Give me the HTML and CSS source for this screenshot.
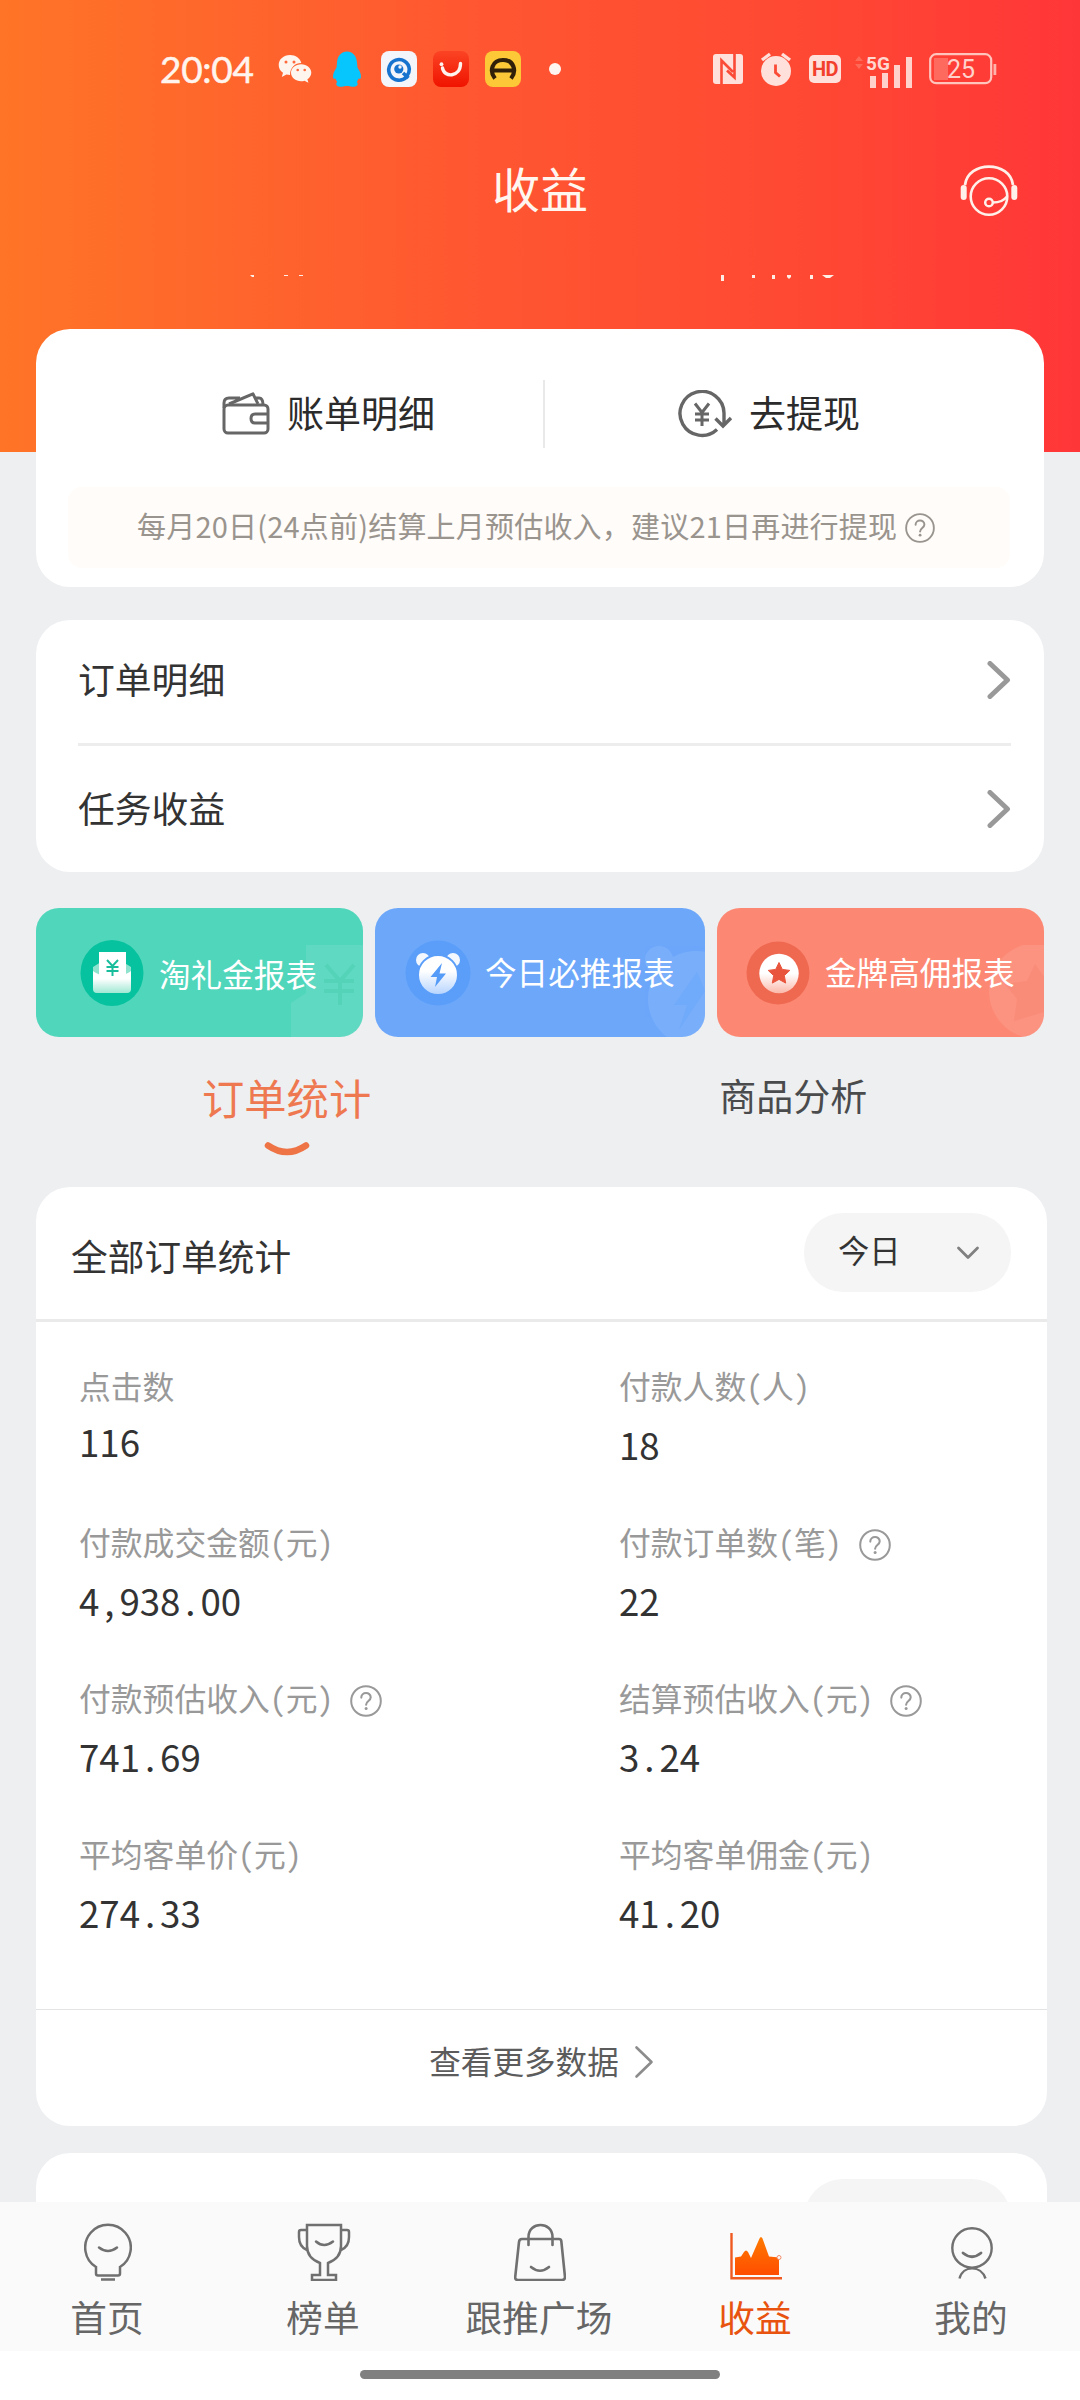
FILE: index.html
```html
<!DOCTYPE html>
<html lang="zh-CN">
<head>
<meta charset="utf-8">
<title>收益</title>
<link rel="stylesheet" href="styles.css">
</head>
<body>
<svg class="defs" width="0" height="0">
  <defs>
    <linearGradient id="fade-green" x1="0" y1="0" x2="0" y2="1"><stop offset=".35" stop-color="#fff"/><stop offset="1" stop-color="#9fe8d3"/></linearGradient>
    <linearGradient id="fade-blue" x1="0" y1="0" x2="0" y2="1"><stop offset=".4" stop-color="#fff"/><stop offset="1" stop-color="#b5d3ff"/></linearGradient>
    <linearGradient id="fade-red" x1="0" y1="0" x2="0" y2="1"><stop offset=".5" stop-color="#fff"/><stop offset="1" stop-color="#fbb9ab"/></linearGradient>
    <linearGradient id="app-red" x1="0" y1="0" x2="0" y2="1"><stop offset="0" stop-color="#fb4424"/><stop offset="1" stop-color="#f01300"/></linearGradient>
    <linearGradient id="chart-fill" x1="0" y1="0" x2="0" y2="1"><stop offset="0" stop-color="#ff7a00"/><stop offset="1" stop-color="#ff4d00"/></linearGradient>
    <symbol id="help" viewBox="0 0 32 32"><circle cx="16" cy="16" r="14.8" fill="none" stroke="currentColor" stroke-width="2"/><path d="M11.3 12.6c0-6 9.4-6 9.4-.3 0 3.6-4.6 3.8-4.6 7.4" fill="none" stroke="currentColor" stroke-width="2.1" stroke-linecap="round"/><circle cx="16.1" cy="23.6" r="1.5" fill="currentColor"/></symbol>
    <symbol id="next" viewBox="0 0 24 38"><path d="M3 2.500 20.500 19 3 35.500" fill="none" stroke="currentColor" stroke-width="5" stroke-linecap="round" stroke-linejoin="round"/></symbol>
  </defs>
</svg>
<div class="screen">
  <header class="header">
    <div class="status">
      <div class="status-left">
        <span class="clock">20:04</span>
        <svg width="34" height="30" viewBox="0 0 34 30"><path fill="#fff5ef" d="M12 1C5.500 1 .700 5.400.700 11c0 3.200 1.600 6 4.300 7.800L3.800 23l4.600-2.500c1.200.300 2.400.400 3.600.4C12 13.500 17 9 23.300 9 22.300 4.300 17.600 1 12 1z"/><path fill="#fff5ef" d="M23.200 10.300c-5.700 0-10.200 3.800-10.200 8.500s4.500 8.500 10.200 8.500c1.200 0 2.300-.1 3.300-.5l3.900 2-1-3.500c2.500-1.600 3.900-4 3.900-6.500 0-4.700-4.500-8.500-10.100-8.500z"/><g fill="#ff6a3c"><circle cx="8" cy="8" r="1.500"/><circle cx="16" cy="8" r="1.500"/><circle cx="19.700" cy="16" r="1.300"/><circle cx="26.700" cy="16" r="1.300"/></g></svg>
        <svg width="30" height="37" viewBox="0 0 30 37"><path fill="#06c6fd" d="M15 .5c5.500 0 9.500 4 10 11l.5 5c2 3.500 3.800 6.300 3.500 9.500-.2 2-1 2-2.500 1.500-.6 1.500-1 2.500-1.700 3.500 1.500 1.500 1.500 4.500-2.800 4.700-2.500 0-4.500-.2-5.500-.7h-3c-1 .5-3 .7-5.500.7-4.300-.2-4.300-3.200-2.800-4.700-.7-1-1.100-2-1.700-3.500-1.500.5-2.300.5-2.500-1.500-.3-3.200 1.500-6 3.500-9.500l.5-5C5.500 4.500 9.500.5 15 .5z"/></svg>
        <svg width="36" height="36" viewBox="0 0 36 36"><rect width="36" height="36" rx="8" fill="#f3f5fa"/><path d="M25.500 26A10.300 10.300 0 1 1 28.300 18c0 3-.8 4.800-2 6.300M22 22l5.500 5" fill="none" stroke="#1873cf" stroke-width="3.600"/><circle cx="17.800" cy="18" r="4.600" fill="#1873cf"/><circle cx="19" cy="16" r="1.700" fill="#f3f5fa"/></svg>
        <svg width="36" height="36" viewBox="0 0 36 36"><rect width="36" height="36" rx="8" fill="url(#app-red)"/><path d="M9.500 17c1.500 10 18 9.500 18-4.500" fill="none" stroke="#fff3ee" stroke-width="3.400" stroke-linecap="round"/><circle cx="8.500" cy="13.200" r="1.900" fill="#fff3ee"/></svg>
        <svg width="36" height="36" viewBox="0 0 36 36"><rect width="36" height="36" rx="8" fill="#fcc837"/><path d="M10 27.500C4 20 7 9 18 9s14 11 8 18.500M9 19.500h18" fill="none" stroke="#30200a" stroke-width="4.200"/></svg>
        <svg class="dot" width="12" height="12" viewBox="0 0 12 12"><circle cx="6" cy="6" r="6" fill="#fff5f0"/></svg>
      </div>
      <div class="status-right">
        <svg class="nfc" width="30" height="30" viewBox="0 0 30 30"><rect width="30" height="30" rx="3" fill="#ffe0da"/><path d="M8.500 30V6.500L20 18M21.500 0v23.500L14 16.500" fill="none" stroke="#fb4a35" stroke-width="2.600"/></svg>
        <svg class="alarm" width="32" height="34" viewBox="0 0 32 34"><circle cx="16" cy="19" r="15" fill="#ffe0da"/><path d="M2 8 10 2M30 8 22 2" stroke="#ffe0da" stroke-width="3.400"/><path d="M15.500 12.500v8l4.500 4" fill="none" stroke="#fb4a35" stroke-width="2.800"/></svg>
        <span class="hd">HD</span>
        <svg class="signal" width="60" height="42" viewBox="0 -6 60 42"><path fill="#ff6a58" d="M1 7l4-5 4 5zM1 10l4 5 4-5z"/><text x="12" y="16" class="signal-text">5G</text><path fill="#ffd3cc" d="M16 22h6v12h-6zM28 19h6v15h-6zM40 11h6v23h-6zM52 3h6v31h-6z"/></svg>
        <svg class="battery" width="68" height="32" viewBox="0 0 68 32"><path fill="#ff6a5e" d="M5 5h14v22H5z"/><rect x="1.200" y="1.200" width="61" height="29" rx="6" fill="none" stroke="#ffc4bc" stroke-width="2.200"/><path fill="#ffb3aa" d="M64.500 11h2.800v11h-2.800z"/><text x="32" y="25" text-anchor="middle" class="battery-text">25</text></svg>
      </div>
    </div>
    <div class="titlebar">
      <h1>收益</h1>
      <svg class="headset" width="58" height="52" viewBox="0 0 58 52" fill="none" stroke="#fff0ea"><path d="M5 20C8-4.500 50-4.500 53 20" stroke-width="2.800"/><circle cx="29" cy="31.500" r="18.300" stroke-width="2.600"/><path d="M3.700 23v9M54.300 23v9" stroke-width="6" stroke-linecap="round"/><circle cx="29" cy="37.500" r="3.800" stroke-width="2.500"/><path d="M33 37.500c6 0 11-2 14-6" stroke-width="2.500"/></svg>
    </div>
  </header>

  <main class="content">
    <svg class="clipped" width="1080" height="54" viewBox="0 0 1080 54" fill="#ffeee5"><path d="M250 0h4v2h-2zM284 0h4v1h-4zM299 0h4v1h-4zM721 0h3v6h-3zM752 0h3v3h-3zM772 0h3v4h-3zM787 0h4v2l-2 2-2-2zM810 0h3v4h-3zM822 0h12l-4 3h-4z"/></svg>

    <section class="card wallet">
      <div class="actions">
        <a class="action bill"><svg width="48" height="44" viewBox="0 0 48 44" fill="none" stroke="#666" stroke-width="3" stroke-linejoin="round"><rect x="2" y="13" width="44" height="28" rx="4"/><path d="M2 16V11q0-5 5-5h11M7 12 31 1.800l5 10M34 6h3q4 0 4 7M46 22H33q-4 0-4 4.500t4 4.500h13"/></svg><span>账单明细</span></a>
        <i class="divider"></i>
        <a class="action cash"><svg width="56" height="48" viewBox="0 0 56 48" fill="none" stroke="#666" stroke-width="3.400"><path d="M40 39.500A22 22 0 1 1 47 23v11M38.500 28.500 46 36l8-8"/><path d="M18 13.500l7 9 7-9M25 22.500V36M18 24h14M18 30h14" stroke-width="3"/></svg><span>去提现</span></a>
      </div>
      <p class="notice"><span>每月20日(24点前)结算上月预估收入，建议21日再进行提现</span><svg width="30" height="30"><use href="#help"/></svg></p>
    </section>

    <section class="card links">
      <a class="link"><span>订单明细</span><svg width="24" height="38"><use href="#next"/></svg></a>
      <a class="link"><span>任务收益</span><svg width="24" height="38"><use href="#next"/></svg></a>
    </section>

    <section class="reports">
      <a class="report green">
        <svg class="ghost" width="72" height="92" viewBox="0 0 72 92"><path fill="#fff" opacity=".09" d="M15 0h57v92H0V58l15-10z"/><path d="M35 20l14 16 14-16M49 36v24M33 36h30M33 46h30" fill="none" stroke="#28bd9b" stroke-width="4" opacity=".2"/></svg>
        <svg width="64" height="66" viewBox="0 0 64 66"><ellipse cx="32" cy="33" rx="31.500" ry="33" fill="#07c29f"/><path d="M13 27l8-5h22l8 5v8H13z" fill="#8fe3ce"/><path d="M19 12h27v28H19z" fill="#fff"/><path d="M13 31c8 7 30 7 38 0v18q0 4-4 4H17q-4 0-4-4z" fill="url(#fade-green)"/><path d="M27 20l5.500 6 5.500-6M32.500 26v10M26.500 27h12M26.500 31h12" fill="none" stroke="#18bd9c" stroke-width="2"/></svg>
        <span>淘礼金报表</span>
      </a>
      <a class="report blue">
        <svg class="ghost" width="62" height="92" viewBox="0 0 62 92"><g fill="#fff" opacity=".09"><circle cx="16" cy="15" r="14"/><circle cx="53" cy="54" r="48"/></g><path d="M54 27 31 60h13l-8 25 26-39z" fill="#589ffa" opacity=".25"/></svg>
        <svg width="66" height="66" viewBox="0 0 66 66"><circle cx="33" cy="33" r="32.500" fill="#5a9ef9"/><circle cx="18" cy="20" r="7" fill="#f3f8ff"/><circle cx="48" cy="20" r="7" fill="#f3f8ff"/><circle cx="33" cy="35" r="20" fill="url(#fade-blue)" stroke="#5a9ef9" stroke-width="2"/><path d="M37 23 25.500 37h6.500l-2 10 11-13.500h-6.500z" fill="#559bf8"/></svg>
        <span>今日必推报表</span>
      </a>
      <a class="report red">
        <svg class="ghost" width="60" height="92" viewBox="0 0 60 92"><circle cx="53" cy="46" r="48" fill="#fff" opacity=".09"/><path d="M51 19l9 13v35l-30 9 3-22-12-15 22-3z" fill="#ee6d57" opacity=".18"/></svg>
        <svg width="64" height="64" viewBox="0 0 64 64"><circle cx="32" cy="32" r="31.500" fill="#ef6951"/><circle cx="33" cy="32.500" r="19.700" fill="url(#fade-red)"/><path d="M33 21.500l3.300 6.900 7.500 1-5.500 5.200 1.400 7.500-6.700-3.700-6.700 3.700 1.400-7.500-5.500-5.200 7.500-1z" fill="#e9543c" stroke="#e9543c" stroke-width="1"/></svg>
        <span>金牌高佣报表</span>
      </a>
    </section>

    <nav class="tabs">
      <a class="tab active"><span>订单统计</span><svg width="46" height="17" viewBox="0 0 46 17"><path d="M4 4.500q19 13 38 0" fill="none" stroke="#ee7446" stroke-width="6.500" stroke-linecap="round"/></svg></a>
      <a class="tab"><span>商品分析</span></a>
    </nav>

    <section class="card stats">
      <div class="stats-head">
        <h2>全部订单统计</h2>
        <div class="picker"><span>今日</span><svg width="24" height="16" viewBox="0 0 24 16"><path d="M2.500 3 12 12.500 21.500 3" fill="none" stroke="#808080" stroke-width="2.800" stroke-linecap="round" stroke-linejoin="round"/></svg></div>
      </div>
      <dl class="grid">
        <div class="cell first"><dt>点击数</dt><dd>116</dd></div>
        <div class="cell"><dt>付款人数(人)</dt><dd>18</dd></div>
        <div class="cell"><dt>付款成交金额(元)</dt><dd>4<b>,</b>938<b>.</b>00</dd></div>
        <div class="cell"><dt>付款订单数(笔)<svg width="32" height="32"><use href="#help"/></svg></dt><dd>22</dd></div>
        <div class="cell"><dt>付款预估收入(元)<svg width="32" height="32"><use href="#help"/></svg></dt><dd>741<b>.</b>69</dd></div>
        <div class="cell"><dt>结算预估收入(元)<svg width="32" height="32"><use href="#help"/></svg></dt><dd>3<b>.</b>24</dd></div>
        <div class="cell"><dt>平均客单价(元)</dt><dd>274<b>.</b>33</dd></div>
        <div class="cell"><dt>平均客单佣金(元)</dt><dd>41<b>.</b>20</dd></div>
      </dl>
      <a class="more"><span>查看更多数据</span><svg width="20" height="34" viewBox="0 0 20 34"><path d="M2.500 2.500 17.500 17 2.500 31.500" fill="none" stroke="#8c8c8c" stroke-width="2.600" stroke-linecap="round" stroke-linejoin="round"/></svg></a>
    </section>

    <section class="card stats peek"><div class="stats-head"><div class="picker"></div></div></section>
  </main>

  <nav class="tabbar">
    <a class="item"><svg width="48" height="58" viewBox="0 0 48 58" fill="none" stroke="#707070" stroke-width="2.500"><path d="M12 44A22.800 22.800 0 1 1 36 44V50.500q0 2-2 2H14q-2 0-2-2zM17 56.500h14"/><path d="M15 24.500q9 7 18 0" stroke-linecap="round"/></svg><span>首页</span></a>
    <a class="item"><svg width="54" height="58" viewBox="0 0 54 58" fill="none" stroke="#707070" stroke-width="2.500"><path d="M10 2h34v21c0 8-5 14-13 17v12h8v5H15v-5h8V40C15 37 10 31 10 23zM10 7H4q-2 0-2 2v5c0 6 3 11 8 13M44 7h6q2 0 2 2v5c0 6-3 11-8 13"/><path d="M19 18.500q8 7 17 0" stroke-linecap="round"/></svg><span>榜单</span></a>
    <a class="item"><svg width="52" height="58" viewBox="0 0 52 58" fill="none" stroke="#707070" stroke-width="2.600" stroke-linecap="round"><path d="M8 16h37q2 0 2.300 2L51 54q0 3-3 3H4q-3 0-2.800-3L5 19q.3-3 3-3zM14.500 22v-8c0-16 24-16 24 0v8"/><path d="M17 44q9 7.500 18 0"/></svg><span>跟推广场</span></a>
    <a class="item active"><svg width="54" height="58" viewBox="0 0 54 58"><path d="M2.500 10v45.300H53" fill="none" stroke="#ef5a20" stroke-width="2.400"/><path d="M6 34.500l6-1 3-4.500q2-3 4 0l3 6L30.500 15.500q1.500-3 3 0L40 33.500l10 1V52H6z" fill="url(#chart-fill)"/><circle cx="50" cy="34.500" r="2" fill="#fafafa" stroke="#f58b68" stroke-width="1"/></svg><span>收益</span></a>
    <a class="item"><svg width="46" height="58" viewBox="0 0 46 58" fill="none" stroke="#707070" stroke-width="2.400"><circle cx="23" cy="25" r="19.700"/><path d="M10.500 55.500C14 42 32 42 36.500 55.500"/><path d="M14 30q9 7.500 18 0" stroke-linecap="round" stroke-width="2.800"/></svg><span>我的</span></a>
  </nav>
  <div class="gesture"><i></i></div>
</div>
</body>
</html>
```
FILE: styles.css
```css
* { box-sizing: border-box; margin: 0; padding: 0; }
body { font-family: "Noto Sans CJK SC", sans-serif; color: #333; }
svg { display: block; flex: none; }
span { white-space: nowrap; }
.defs { position: absolute; }

.screen {
  width: 1080px; height: 2400px; overflow: hidden;
  display: flex; flex-direction: column;
  background: linear-gradient(90deg, #ff7427 0%, #ff5631 45%, #ff4833 75%, #ff3638 100%) 0 0 / 100% 452px no-repeat #eeeff1;
}

.header { height: 275px; flex: none; padding-top: 48px; }
.status { height: 42px; display: flex; justify-content: space-between; padding: 0 83px 0 160px; }
.status-left, .status-right { display: flex; align-items: center; }
.clock { font: 400 37px/42px Lato, sans-serif; color: #fff5ee; width: 118px; letter-spacing: -.3px; -webkit-text-stroke: .5px #fff5ee; }
.status-left svg + svg { margin-left: 16px; }
.status-left svg:nth-of-type(2) { margin-left: 20px; }
.status-left svg:nth-of-type(3) { margin-left: 19px; }
.status-left .dot { margin-left: 28px; }
.alarm { margin-left: 17px; }
.hd { margin-left: 17px; width: 32px; height: 28px; border-radius: 5px; background: #ffe0da; color: #f2402c; font: 700 20px/28px Roboto, sans-serif; text-align: center; letter-spacing: -.5px; }
.signal { margin-left: 13px; }
.signal-text { font: 700 19px Roboto, sans-serif; fill: #ffd8d1; }
.battery { margin-left: 15px; }
.battery-text { font: 400 25px Roboto, sans-serif; fill: #ffd3cc; }
.titlebar { height: 150px; margin-top: 25px; display: grid; grid-template-columns: 1fr auto 1fr; padding: 0 62px; }
.titlebar h1 { grid-column: 2; font-size: 48px; font-weight: 400; line-height: 144px; height: 144px; color: #fff6f0; }
.headset { justify-self: end; margin-top: 50px; }

.content { flex: 1; min-height: 0; overflow: hidden; padding: 0 36px; }
.clipped { margin-left: -36px; }
.card { background: #fff; border-radius: 34px; }

.wallet { height: 258px; padding: 51px 34px 0 32px; }
.actions { height: 68px; display: flex; align-items: center; }
.action { display: flex; align-items: center; font-size: 37px; line-height: 56px; color: #2b2b2b; }
.action span { margin-top: -5px; }
.bill { width: 475px; padding-left: 154px; gap: 17px; }
.cash { padding-left: 132px; gap: 16px; }
.divider { width: 2px; height: 68px; background: #e9e9e9; }
.notice { height: 81px; margin-top: 39px; background: #fffcf9; border-radius: 14px; display: flex; align-items: center; padding-left: 69px; font-size: 29px; line-height: 44px; color: #9a948e; gap: 8px; }
.notice span { margin-top: -5px; letter-spacing: .2px; }

.links { margin-top: 33px; height: 252px; padding: 0 33px 0 42px; }
.link { height: 123px; display: flex; align-items: center; justify-content: space-between; font-size: 36.8px; line-height: 56px; color: #333; padding-bottom: 3px; }
.link span { margin-top: -4px; }
.link svg { color: #999; }
.link + .link { height: 129px; border-top: 3px solid #ededed; padding-bottom: 1px; }

.reports { margin-top: 36px; display: grid; grid-template-columns: 327px 330px 327px; gap: 12px; }
.report { position: relative; overflow: hidden; height: 129px; border-radius: 23px; display: flex; align-items: center; font-size: 31.6px; line-height: 48px; color: #fff; }
.report > span { position: relative; margin-top: -3px; }
.ghost { position: absolute; right: 0; bottom: 0; }
.green { background: #50d6bb; padding-left: 44px; gap: 15px; }
.green > span { margin-top: 1px; }
.blue { background: #6ca7fa; padding-left: 30px; gap: 14px; }
.red { background: #fc8874; padding-left: 29px; gap: 15px; }

.tabs { height: 150px; display: flex; color: #4a4b4d; }
.tab { display: flex; flex-direction: column; align-items: center; font-size: 37px; line-height: 60px; padding-top: 28px; margin-left: 348px; }
.tab.active { color: #ee7850; font-size: 42.3px; line-height: 64px; padding-top: 28px; margin-left: 166px; }
.tab.active svg { margin-top: 12px; }

.stats { height: 939px; margin-right: -3px; }
.stats-head { height: 135px; border-bottom: 3px solid #eaeaea; display: flex; justify-content: space-between; padding: 26px 36px 0; }
.stats-head h2 { font-size: 36.7px; font-weight: 400; line-height: 56px; margin-top: 14px; margin-left: -1px; }
.picker { width: 207px; height: 79px; margin-left: auto; border-radius: 39px; background: #f5f5f5; display: flex; align-items: center; justify-content: space-between; padding: 0 31px 0 34px; font-size: 31.3px; line-height: 48px; }
.picker span { margin-top: -5px; }
.grid { height: 687px; display: grid; grid-template-columns: 540px 1fr; grid-auto-rows: 156px; padding: 39px 0 0 43px; }
.cell dt { height: 48px; display: flex; align-items: center; gap: 17px; font-size: 31.8px; line-height: 48px; color: #999; font-feature-settings: "hwid"; }
.cell dt svg { margin-top: 7px; }
.cell dd { margin-top: 7px; font-size: 36.7px; line-height: 56px; color: #333; }
.cell dd b { display: inline-block; width: 20px; font-weight: 400; text-align: center; }
.cell.first dd { margin-top: 4px; }
.more { height: 117px; border-top: 1px solid #e2e4e6; display: flex; justify-content: center; align-items: center; padding-bottom: 13px; gap: 15px; font-size: 31.6px; line-height: 48px; color: #5c5c5c; }
.more span { margin-top: -4px; }
.peek { margin-top: 27px; }
.peek .stats-head { border: 0; }

.tabbar { height: 149px; flex: none; background: #fafafa; display: flex; }
.item { width: 216px; display: flex; flex-direction: column; align-items: center; padding-top: 21px; font-size: 36.7px; line-height: 54px; color: #666; }
.item span { margin: 8px 2px 0 0; }
.item.active { color: #e85310; }
.gesture { height: 49px; flex: none; background: #fff; padding-top: 19px; }
.gesture i { display: block; width: 360px; height: 9px; margin: 0 auto; border-radius: 5px; background: #808080; }
```
